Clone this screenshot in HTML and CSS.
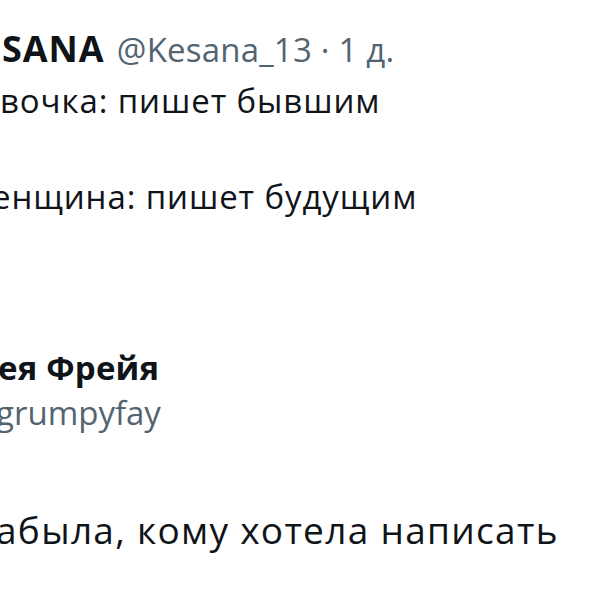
FILE: index.html
```html
<!DOCTYPE html>
<html lang="ru">
<head>
<meta charset="utf-8">
<link rel="stylesheet" href="styles.css">
</head>
<body>
<main class="page">
  <article class="tweet first">
    <div class="row head"><span class="cut">KE</span><span class="vis v-head"><span class="name">SANA</span> <span class="handle">@Kesana_13 · 1 д.</span></span></div>
    <div class="row"><span class="cut">Де</span><span class="vis v-l1">вочка: пишет бывшим</span></div>
    <div class="row">&nbsp;</div>
    <div class="row"><span class="cut">Ж</span><span class="vis v-l3">енщина: пишет будущим</span></div>
  </article>
  <article class="tweet second">
    <div class="row name2"><span class="cut">Ф</span><span class="vis v-n2">ея Фрейя</span></div>
    <div class="row handle2"><span class="cut">@</span><span class="vis v-h2">grumpyfay</span></div>
    <div class="row body2"><span class="cut">З</span><span class="vis v-b2">абыла, кому хотела написать</span></div>
  </article>
</main>
</body>
</html>
```
FILE: styles.css
```css
html, body { margin: 0; padding: 0; background: #fff; }
body { width: 600px; height: 600px; overflow: hidden; font-family: "Open Sans", "Inter", sans-serif; color: #0f1419; }
.page { padding-top: 25px; }
.row { font-size: 33px; line-height: 48px; letter-spacing: 0.9px; white-space: nowrap; }
.head { margin-bottom: 3px; }
.cut { display: inline-block; width: 0; direction: rtl; }
.vis { display: inline-block; }
.name { font-weight: 700; font-size: 36px; }
.handle { color: #536471; letter-spacing: 0.2px; margin-left: 3px; }
.v-head { margin-left: 2px; }
.v-l1 { margin-left: 0; }
.v-l3 { margin-left: -8px; }
.second { margin-top: 126px; }
.name2 { font-weight: 700; line-height: 42px; letter-spacing: 0.2px; }
.v-n2 { margin-left: -2px; }
.handle2 { color: #536471; line-height: 42px; letter-spacing: 0; margin-top: 3px; }
.v-h2 { margin-left: -4px; }
.body2 { margin-top: 72px; font-size: 37px; letter-spacing: 1.3px; }
.v-b2 { margin-left: -4px; }
```
